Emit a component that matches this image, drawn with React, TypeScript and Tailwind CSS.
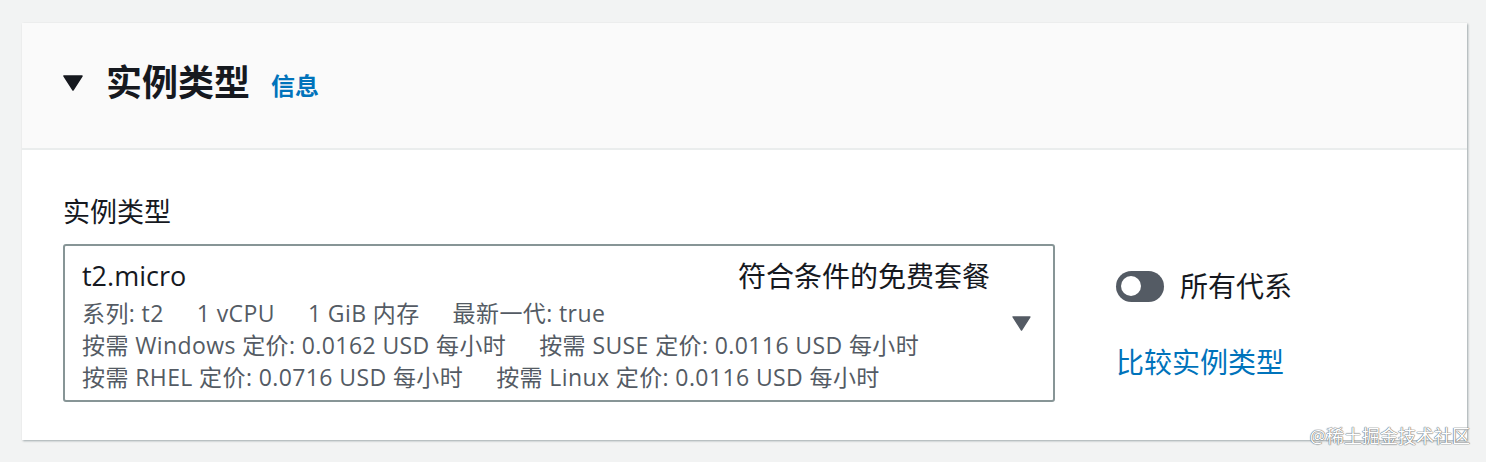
import React from 'react';

const font = { fontFamily: '"Open Sans", "Noto Sans CJK SC", sans-serif' };

const Caret: React.FC<{ className?: string }> = ({ className }) => (
  <svg viewBox="0 0 20 16" className={className}>
    <path d="M1 1h18L10 15z" fill="currentColor" stroke="currentColor" strokeWidth="1.5" strokeLinejoin="round" />
  </svg>
);

export default function App() {
  return (
    <div
      className="relative min-h-[462px] w-[1486px] bg-[#f2f3f3] pt-[23px] pb-[19px] pl-[22px] font-['Open_Sans','Noto_Sans_CJK_SC',sans-serif]"
      style={font}
    >
      <div className="w-[1445px] bg-white shadow-[1px_1px_2px_0_rgba(0,28,36,0.35)]">
        <div className="flex h-[127px] items-center border-b-2 border-[#eaeded] bg-[#fafafa] pl-[41px] pb-[6px]">
          <Caret className="h-[16px] w-[20px] text-[#16191f]" />
          <h2 className="ml-[23px] text-[36px] font-bold leading-none text-[#16191f]">实例类型</h2>
          <a className="ml-[21px] mt-[6px] text-[24px] font-bold leading-none text-[#0073bb]">信息</a>
        </div>

        <div className="px-[41px] pt-[46px] pb-[38px]">
          <div className="text-[27px] leading-[32px] text-[#16191f]">实例类型</div>
          <div className="mt-[16px] flex items-start">
            <div className="flex h-[158px] w-[992px] items-center rounded-[3px] border-2 border-[#879596] pl-[17px] pr-[22px] pt-[7px]">
              <div className="flex-1">
                <div className="flex items-center justify-between">
                  <span className="text-[27px] leading-[32px] text-[#16191f]">t2.micro</span>
                  <span className="text-[28px] leading-[32px] text-[#16191f]">符合条件的免费套餐</span>
                </div>
                <div className="mt-[5px] text-[23px] leading-[32px] tracking-[0.4px] text-[#545b64]">
                  <div className="flex gap-x-[33px]">
                    <span>系列: t2</span>
                    <span>1 vCPU</span>
                    <span>1 GiB 内存</span>
                    <span>最新一代: true</span>
                  </div>
                  <div className="flex gap-x-[33px]">
                    <span>按需 Windows 定价: 0.0162 USD 每小时</span>
                    <span>按需 SUSE 定价: 0.0116 USD 每小时</span>
                  </div>
                  <div className="flex gap-x-[33px]">
                    <span>按需 RHEL 定价: 0.0716 USD 每小时</span>
                    <span>按需 Linux 定价: 0.0116 USD 每小时</span>
                  </div>
                </div>
              </div>
              <Caret className="ml-[22px] -mt-[7px] h-[15px] w-[19px] text-[#545b64]" />
            </div>

            <div className="ml-[61px] pt-[26px]">
              <div className="flex items-center">
                <div className="flex h-[31px] w-[48px] items-center rounded-full bg-[#545b64] pl-[5px]">
                  <div className="h-[20px] w-[20px] rounded-full bg-white" />
                </div>
                <span className="ml-[16px] text-[28px] leading-[32px] text-[#16191f]">所有代系</span>
              </div>
              <a className="mt-[44px] block text-[28px] leading-[32px] text-[#0073bb]">比较实例类型</a>
            </div>
          </div>
        </div>
      </div>

      <div className="absolute bottom-[17px] right-[16px] text-[18px] leading-none text-white [text-shadow:0_0_1px_#6b7075,0_0_1px_#6b7075,0_0_1px_#6b7075]">
        @稀土掘金技术社区
      </div>
    </div>
  );
}
